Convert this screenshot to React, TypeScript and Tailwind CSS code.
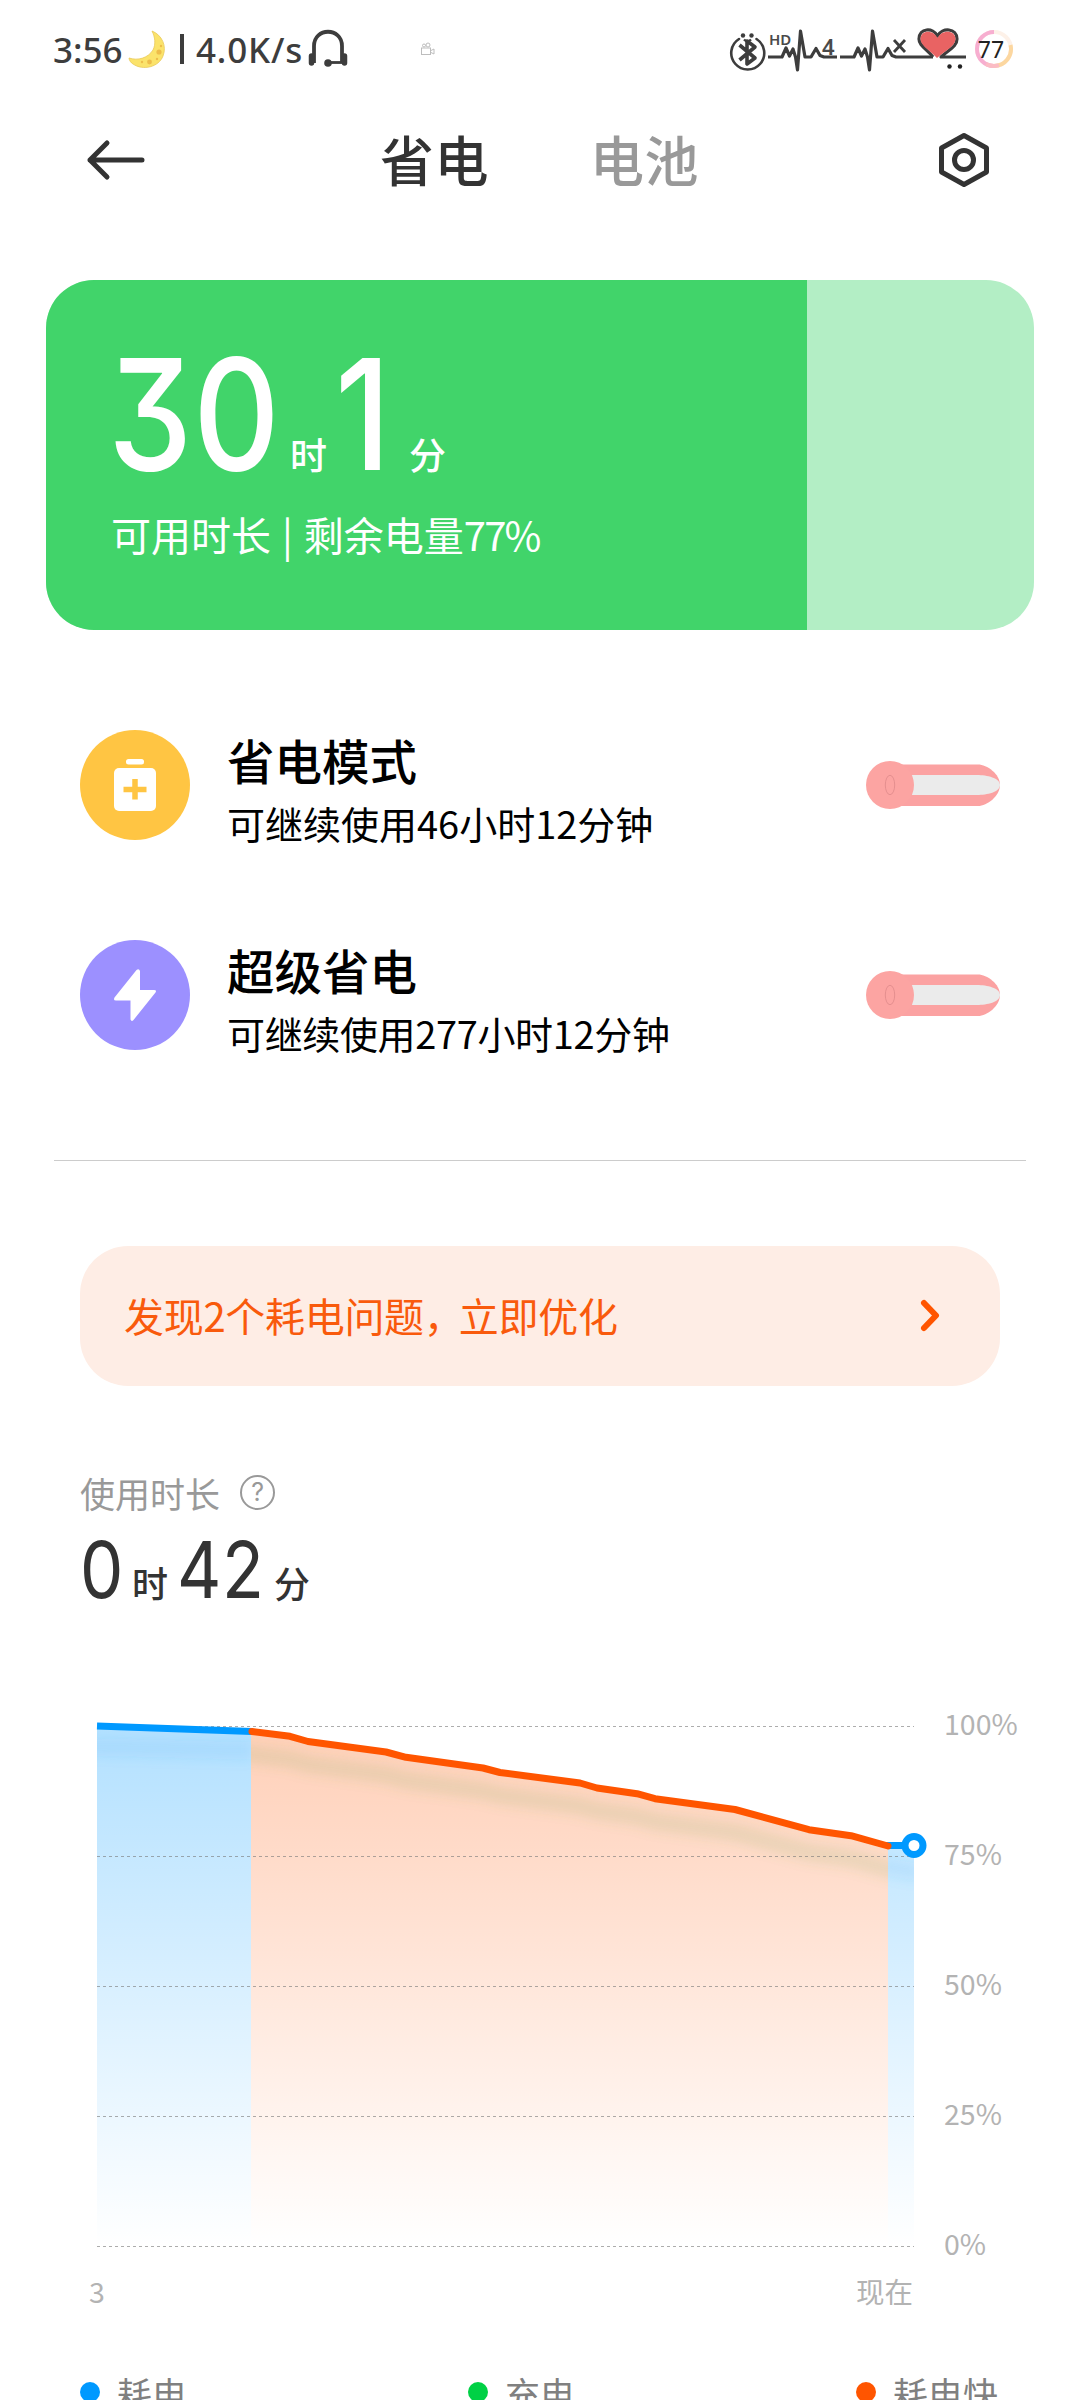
import type { ReactNode } from 'react'

const modes = [
  {
    title: '省电模式',
    desc: '可继续使用46小时12分钟',
    color: 'bg-[#ffc543]',
    tracking: 'tracking-normal',
    icon: <BatteryPlusIcon />,
  },
  {
    title: '超级省电',
    desc: '可继续使用277小时12分钟',
    color: 'bg-[#9c90ff]',
    tracking: 'tracking-[-0.35px]',
    icon: <BoltIcon />,
  },
]

const legend = [
  { label: '耗电', color: 'bg-[#0099ff]' },
  { label: '充电', color: 'bg-[#00d145]' },
  { label: '耗电快', color: 'bg-[#ff5500]' },
]

const levels = ['100%', '75%', '50%', '25%', '0%']

const fastDrain =
  '172,31.5 210,36.3 228,41.5 306,52 326,57.3 403,68 420,72.5 500,83 517,88 557,93.7 575,98.7 655,109.5 729,129.7 771,135.7 808,146'

function BatteryPlusIcon() {
  return (
    <svg width="110" height="110" viewBox="0 0 110 110">
      <rect x="46" y="29" width="18" height="5.5" rx="2.5" fill="#fff" />
      <rect x="34" y="38" width="42" height="43" rx="5" fill="#fff" />
      <path d="M43.5 59.5h23M55 49v20.5" stroke="#ffc543" strokeWidth="5.5" />
    </svg>
  )
}

function BoltIcon() {
  return (
    <svg width="110" height="110" viewBox="0 0 110 110">
      <path
        d="M56.5 30 34.500 57.500Q33 60.500 36 60.500H50.500V79.500Q51.500 82 53.500 80L75.500 52.500Q77 50 74 50H60V31Q59 28 56.5 30Z"
        fill="#fff"
      />
    </svg>
  )
}

function MoonIcon() {
  return (
    <svg className="ml-[3px]" width="38" height="38" viewBox="0 0 38 38">
      <path
        d="M24 1C34 5 39 16 35 26 31 37 15 41 5 34 3 33 1 30 1 28 10 31 20 28 25 20 28 14 27 7 24 1Z"
        fill="#fbe36b"
        stroke="#e9c95a"
        strokeWidth="0.8"
      />
      <circle cx="31" cy="22" r="2.6" fill="#eebd4b" />
      <circle cx="21.500" cy="32" r="2.400" fill="#eebd4b" />
      <circle cx="33" cy="16" r="1.200" fill="#eebd4b" />
      <circle cx="29" cy="29" r="1.200" fill="#eebd4b" />
      <circle cx="14" cy="32" r="1.200" fill="#eebd4b" />
    </svg>
  )
}

function HeadsetIcon() {
  return (
    <svg className="ml-[3px]" width="42" height="40" viewBox="0 0 42 40" fill="none" stroke="#3d3d3d">
      <path d="M7 34V17C7 -2 35 -2 35 17V34" strokeWidth="3.800" />
      <path d="M4.500 27v7M37.500 27v7" strokeWidth="5.500" strokeLinecap="round" />
      <path d="M22 33.500h13" strokeWidth="2.800" />
      <circle cx="21" cy="34" r="3.800" fill="#3d3d3d" stroke="none" />
    </svg>
  )
}

function CameraIcon() {
  return (
    <svg className="ml-[71px]" width="16" height="14" viewBox="0 0 16 14" fill="none" stroke="#bdbdbd">
      <rect x="1.500" y="6" width="9" height="6.500" />
      <circle cx="4" cy="3.500" r="1.500" />
      <circle cx="8" cy="3" r="2" />
      <path d="M11 8.500 14 7v5l-3-1.500" />
    </svg>
  )
}

function SignalIcons() {
  return (
    <svg
      width="244"
      height="52"
      viewBox="0 0 244 52"
      fill="none"
      stroke="#3d3d3d"
      strokeLinejoin="round"
      className="font-['Noto_Sans']"
    >
      {/* bluetooth face */}
      <path d="M10 16A16.500 16.500 0 1 0 27.500 16" strokeWidth="2.600" strokeLinecap="round" />
      <path d="M10.500 22 26 35 18 41V18l8 6L10.500 37" strokeWidth="3.600" />
      <circle cx="14" cy="12.500" r="2.2" fill="#3d3d3d" stroke="none" />
      <circle cx="22.500" cy="12.500" r="2.2" fill="#3d3d3d" stroke="none" />
      <path d="M15 16.500q3.500 3.500 7 0" strokeWidth="2.400" />
      {/* pulse lines */}
      <path d="M39 34h14l4-9 3.500 8 3.500-7 2.500 8L68.500 47 71.500 8l4.500 26H82l5-8.500 4 7 4 1.500h13" strokeWidth="3.2" />
      <path d="M111 34h14l4-9 3.500 8 3.500-7 2.500 8L140.500 47 143.500 8l4.500 26H154l5-8.500 4 7 4 1.500h37" strokeWidth="3.2" />
      {/* heart */}
      <path
        d="M204 34C198 26 190 23 190 16 190 5 204 4 208.500 13 213 4 228 5 228 16 228 24 219 27 212 34H237"
        strokeWidth="3.2"
      />
      <path
        d="M208 35C199 26 191.500 22 191.500 16 191.500 7 204 6 208.500 15 213 6 226.500 7 226.500 16 226.500 23 216 28 208 35Z"
        fill="#e96363"
        stroke="none"
      />
      <circle cx="220.500" cy="43.500" r="2.200" fill="#222" stroke="none" />
      <circle cx="231" cy="43.500" r="2.200" fill="#222" stroke="none" />
      <g fill="#4a4a4a" stroke="none">
        <text x="40" y="21.5" fontSize="15" fontWeight="600">HD</text>
        <text x="93" y="32" fontSize="22" fontWeight="600">4</text>
      </g>
      <path d="M165 17l11 12M176 17l-11 12" strokeWidth="2.800" />
    </svg>
  )
}

function BatteryRing() {
  return (
    <div className="relative ml-[1px] flex h-[40px] w-[40px] items-center justify-center">
      <svg className="absolute inset-0" width="40" height="40" viewBox="0 0 40 40" fill="none" strokeWidth="4">
        <circle cx="20" cy="20" r="17" stroke="#fdf1e8" />
        <path d="M20 3A17 17 0 0 0 20 37" stroke="#f7aed0" />
        <path d="M20 37A17 17 0 0 0 36.500 16" stroke="#fcd7a0" />
        <path d="M12 35A17 17 0 0 0 25 36.200" stroke="#fbbcc4" />
      </svg>
      <span className="relative mr-[6px] font-['Noto_Sans'] text-[23px] leading-none text-[#222]">77</span>
    </div>
  )
}

function StatusBar() {
  return (
    <div className="flex h-[98px] shrink-0 items-center pl-[53px] text-[#3d3d3d]">
      <span className="w-[72px] font-['Noto_Sans'] text-[35px] leading-none font-medium">3:56</span>
      <MoonIcon />
      <span className="ml-[14px] h-[30px] w-[4px] bg-[#3d3d3d]" />
      <span className="ml-[12px] w-[108px] font-['Noto_Sans'] text-[35px] leading-none font-medium tracking-[0.8px]">
        4.0K/s
      </span>
      <HeadsetIcon />
      <CameraIcon />
      <div className="ml-[293px] flex items-center">
        <SignalIcons />
        <BatteryRing />
      </div>
    </div>
  )
}

function Header() {
  return (
    <header className="flex h-[122px] shrink-0 items-center pl-[85px] text-[54px] leading-none font-medium">
      <svg className="mt-[2px]" width="62" height="44" viewBox="0 0 62 44" fill="none" stroke="#333" strokeWidth="5" strokeLinecap="round" strokeLinejoin="round">
        <path d="M57 22H5M22 5 5 22l17 17" />
      </svg>
      <h1 className="ml-[233px] tracking-[0.5px] text-[#333]">省电</h1>
      <span className="ml-[101px] tracking-[0.5px] text-[#999]">电池</span>
      <svg className="mt-[2px] ml-[237px]" width="56" height="60" viewBox="0 0 56 60" fill="none" stroke="#333" strokeWidth="5" strokeLinejoin="round">
        <path d="M28 5.500 50.500 18V42L28 54.500 5.500 42V18Z" />
        <circle cx="28" cy="30" r="9.500" />
      </svg>
    </header>
  )
}

function Digits({ className, children }: { className: string; children: ReactNode }) {
  return (
    <span
      className={`inline-block origin-left scale-x-[0.87] font-['Inter'] leading-none [font-feature-settings:'cv09'] ${className}`}
    >
      {children}
    </span>
  )
}

function RemainingCard() {
  return (
    <section className="mx-[46px] mt-[60px] flex h-[350px] shrink-0 overflow-hidden rounded-[48px] bg-[#b3eec5] text-white">
      <div className="w-[761px] bg-[#41d46a] pt-[57px] pl-[62px]">
        <div className="flex items-baseline text-[37px] leading-none font-medium">
          <Digits className="w-[182px] text-[154px] font-medium tracking-[1px]">30</Digits>
          <span className="w-[45px]">时</span>
          <Digits className="w-[74px] text-[154px] font-medium">1</Digits>
          <span>分</span>
        </div>
        <p className="mt-[23px] ml-[3px] text-[40px] leading-none whitespace-nowrap">
          可用时长<span className="mx-[2px]"> | </span>剩余电量<span className="tracking-[-1.8px]">77%</span>
        </p>
      </div>
    </section>
  )
}

function Toggle() {
  return (
    <svg width="136" height="50" viewBox="0 0 136 50">
      <path d="M25 4.500H113C122 4.500 135 14 135 25S122 46 113 46H25Z" fill="#fba2a2" />
      <path d="M25 15H112C122 15 135 18 135 25S122 35 112 35H25Z" fill="#ebebeb" />
      <circle cx="25" cy="25" r="24" fill="#fca4a2" />
      <ellipse cx="25" cy="25" rx="4.700" ry="9.700" fill="none" stroke="#e58f8f" />
    </svg>
  )
}

function ModeRow({ mode }: { mode: (typeof modes)[number] }) {
  return (
    <div className="flex h-[110px] items-center text-black">
      <div className={`size-[110px] shrink-0 rounded-full ${mode.color}`}>{mode.icon}</div>
      <div className="mt-[8px] ml-[37px] grow">
        <div className="text-[47.5px] leading-none font-medium">{mode.title}</div>
        <div className={`mt-[20px] text-[38px] leading-none ${mode.tracking}`}>{mode.desc}</div>
      </div>
      <Toggle />
    </div>
  )
}

function IssueBanner() {
  return (
    <div className="mx-[80px] mt-[85px] flex h-[140px] shrink-0 items-center justify-between rounded-[48px] bg-[#feede5] pr-[58px] pl-[44px] text-[40px] leading-none text-[#f95a0c]">
      <span className="-mt-[3px] tracking-[-0.3px]">
        发现2个耗电问题<span className="tracking-[-5px]">，</span>立即优化
      </span>
      <svg width="24" height="36" viewBox="0 0 24 36" fill="none" stroke="#ff5500" strokeWidth="6" strokeLinecap="round" strokeLinejoin="round">
        <path d="M6 5 18 17.500 6 30" />
      </svg>
    </div>
  )
}

function UsageHeader() {
  return (
    <div className="mt-[86px] ml-[80px] shrink-0">
      <div className="flex h-[40px] items-center text-[35px] leading-none text-[#999]">
        使用时长
        <span className="ml-[20px] flex size-[35px] items-center justify-center rounded-full border-[2.5px] border-[#999] font-['Inter'] text-[25px] leading-none">
          ?
        </span>
      </div>
      <div className="mt-[18px] flex items-baseline text-[36px] leading-none text-[#333]">
        <Digits className="w-[52px] text-[79px]">0</Digits>
        <span className="w-[45px] font-medium">时</span>
        <Digits className="w-[97px] text-[79px] tracking-[0.8px]">42</Digits>
        <span className="font-medium">分</span>
      </div>
    </div>
  )
}

function BatteryChart() {
  return (
    <div className="mt-[91px] ml-[80px] shrink-0 text-[28.5px] leading-none text-[#b3b3b3]">
      <div className="flex">
        <svg width="864" height="570" viewBox="0 0 864 570" fill="none">
          <defs>
            <linearGradient id="slow" x1="0" y1="26" x2="0" y2="546" gradientUnits="userSpaceOnUse">
              <stop stopColor="#0099ff" stopOpacity="0.3" />
              <stop offset="1" stopColor="#0099ff" stopOpacity="0" />
            </linearGradient>
            <linearGradient id="fast" x1="0" y1="26" x2="0" y2="546" gradientUnits="userSpaceOnUse">
              <stop stopColor="#ff5500" stopOpacity="0.28" />
              <stop offset="1" stopColor="#ff5500" stopOpacity="0" />
            </linearGradient>
            <filter id="soft" filterUnits="userSpaceOnUse" x="-50" y="0" width="950" height="300">
              <feGaussianBlur stdDeviation="6" />
            </filter>
            <clipPath id="slowArea">
              <path d="M17 26 171 31.500V546H17ZM808 146H834V546H808Z" />
            </clipPath>
            <clipPath id="fastArea">
              <path d={`M171 31.500 L${fastDrain} V546H171Z`} />
            </clipPath>
          </defs>
          <path d="M17 26 171 31.500V546H17Z" fill="url(#slow)" />
          <path d={`M171 31.500 L${fastDrain} V546H171Z`} fill="url(#fast)" />
          <path d="M808 146H834V546H808Z" fill="url(#slow)" />
          {/* glow below the line */}
          <g clipPath="url(#slowArea)">
            <path d="M-20 46 172 51M800 165 840 173" stroke="#28a0f0" strokeOpacity="0.1" strokeWidth="18" filter="url(#soft)" />
          </g>
          <g clipPath="url(#fastArea)">
            <polyline
              points={`120,30 ${fastDrain} 840,152`}
              transform="translate(0 23)"
              stroke="#6ea04a"
              strokeOpacity="0.13"
              strokeWidth="18"
              filter="url(#soft)"
            />
          </g>
          <g stroke="#777" strokeOpacity="0.6" strokeDasharray="3 3">
            <path d="M17 26.500H834M17 156.500H834M17 286.500H834M17 416.500H834M17 546.500H834" />
          </g>
          <path d="M17 26 172 31.500M806 145.500H834" stroke="#0099ff" strokeWidth="7" />
          <polyline points={fastDrain} stroke="#ff5500" strokeWidth="7" strokeLinejoin="round" strokeLinecap="round" />
          <circle cx="834" cy="145.500" r="9" fill="#fff" stroke="#0099ff" strokeWidth="7" />
        </svg>
        <div className="mt-[8px] flex h-[550px] flex-col justify-between">
          {levels.map((level) => (
            <span key={level} className="leading-[30px]">
              {level}
            </span>
          ))}
        </div>
      </div>
      <div className="mt-[7px] flex w-[833px] justify-between pl-[9px]">
        <span>3</span>
        <span>现在</span>
      </div>
    </div>
  )
}

export default function App() {
  return (
    <main className="flex h-[2400px] w-[1080px] flex-col overflow-hidden bg-white font-['Noto_Sans_CJK_SC',sans-serif]">
      <StatusBar />
      <Header />
      <RemainingCard />
      <section className="mt-[100px] flex shrink-0 flex-col gap-[100px] pr-[79px] pl-[80px]">
        {modes.map((mode) => (
          <ModeRow key={mode.title} mode={mode} />
        ))}
      </section>
      <div className="mx-[54px] mt-[110px] h-px shrink-0 bg-[#cccccc]" />
      <IssueBanner />
      <UsageHeader />
      <BatteryChart />
      <div className="mt-[69px] ml-[80px] flex shrink-0 text-[35px] leading-none text-[#808080]">
        {legend.map((item) => (
          <div key={item.label} className="flex w-[388px] shrink-0 items-center">
            <span className={`mr-[17px] size-[20px] rounded-full ${item.color}`} />
            {item.label}
          </div>
        ))}
      </div>
    </main>
  )
}
